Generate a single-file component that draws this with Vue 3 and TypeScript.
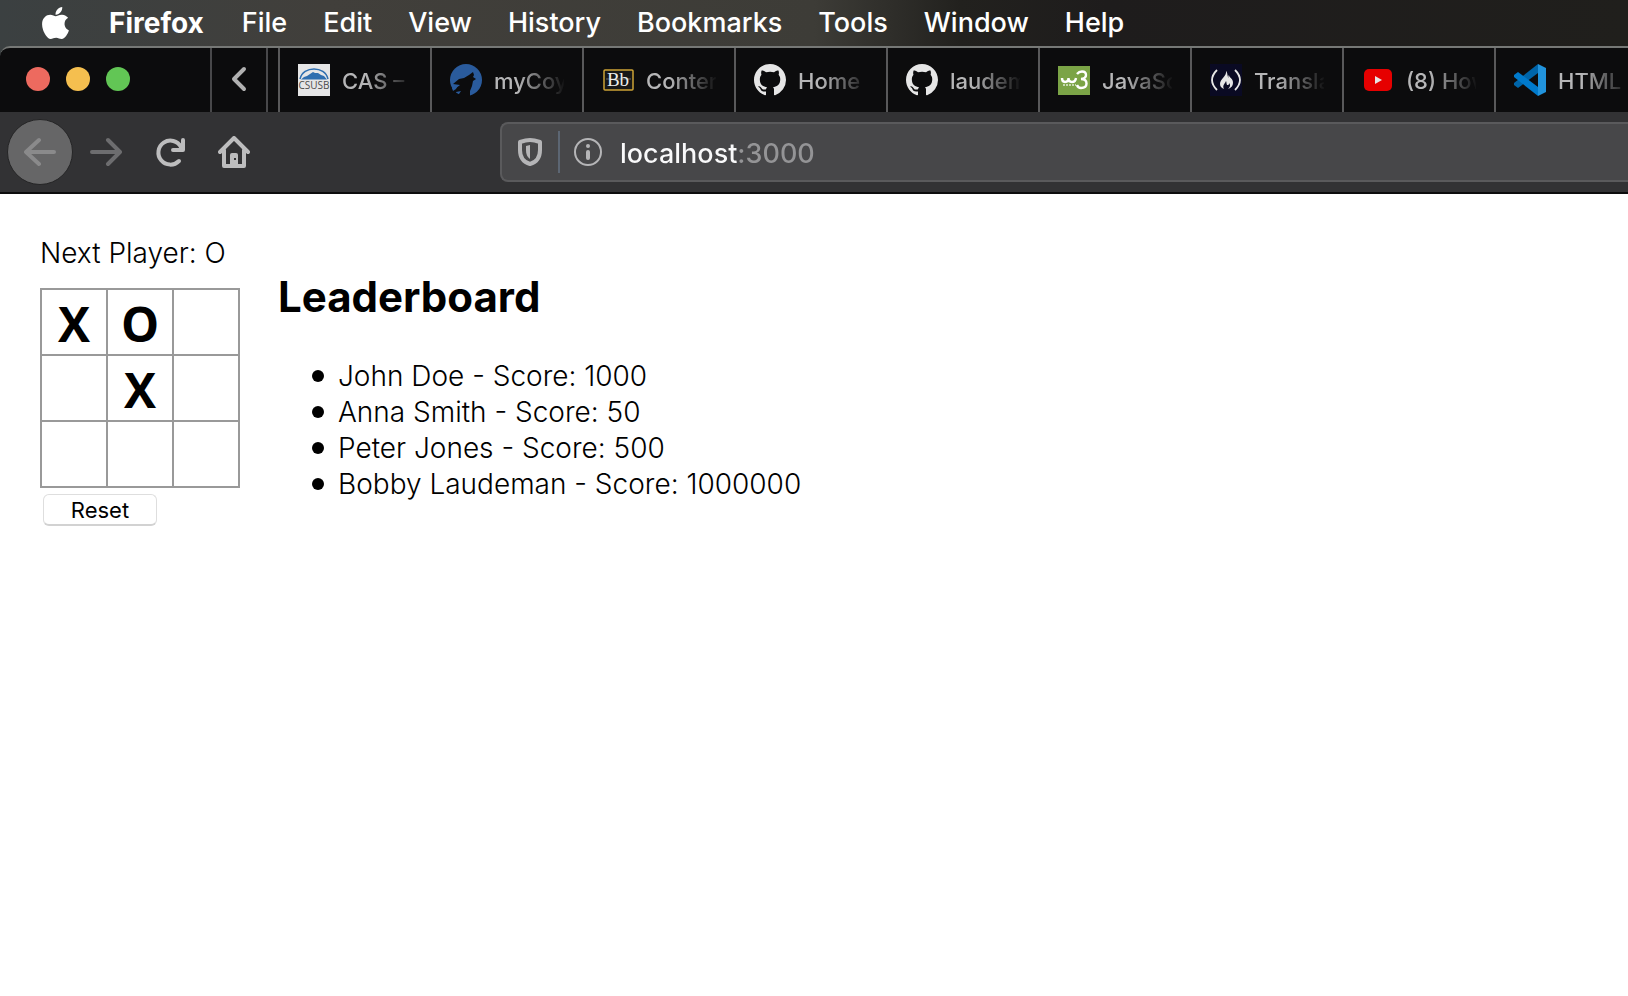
<script setup lang="ts">
import { ref, computed } from 'vue'

type Mark = 'X' | 'O' | ''

interface Tab {
  icon: string
  label: string
}

interface Entry {
  name: string
  score: number
}

const menus: string[] = ['Firefox', 'File', 'Edit', 'View', 'History', 'Bookmarks', 'Tools', 'Window', 'Help']

const tabs: Tab[] = [
  { icon: 'csusb', label: 'CAS –' },
  { icon: 'coyote', label: 'myCoy' },
  { icon: 'bb', label: 'Conter' },
  { icon: 'github', label: 'Home' },
  { icon: 'github', label: 'laudem' },
  { icon: 'w3', label: 'JavaSc' },
  { icon: 'fcc', label: 'Transla' },
  { icon: 'youtube', label: '(8) How' },
  { icon: 'vscode', label: 'HTML' },
]

const leaders: Entry[] = [
  { name: 'John Doe', score: 1000 },
  { name: 'Anna Smith', score: 50 },
  { name: 'Peter Jones', score: 500 },
  { name: 'Bobby Laudeman', score: 1000000 },
]

const address = ref('localhost:3000')
const squares = ref<Mark[]>(['X', 'O', '', '', 'X', '', '', '', ''])
const nextPlayer = computed<Mark>(() => (squares.value.filter(Boolean).length % 2 === 0 ? 'X' : 'O'))

function play(index: number): void {
  if (!squares.value[index]) squares.value[index] = nextPlayer.value
}

function reset(): void {
  squares.value = Array<Mark>(9).fill('')
}
</script>

<template>
  <div class="screen">
    <nav class="menubar" aria-label="Menu bar">
      <button class="apple" type="button" aria-label="Apple menu">
        <svg viewBox="4 32 376 448" width="27" height="32" fill="#fff">
          <path d="M318.7 268.7c-.2-36.7 16.4-64.4 50-84.8-18.8-26.9-47.2-41.7-84.7-44.6-35.5-2.8-74.3 20.7-88.5 20.7-15 0-49.4-19.7-76.4-19.7C63.3 141.2 4 184.8 4 273.5q0 39.3 14.4 81.2c12.8 36.7 59 126.7 107.2 125.2 25.2-.6 43-17.9 75.8-17.9 31.8 0 48.3 17.9 76.4 17.9 48.6-.7 90.4-82.5 102.6-119.3-65.2-30.7-61.7-90-61.7-91.9zm-56.6-164.2c27.3-32.4 24.8-61.9 24-72.5-24.1 1.4-52 16.4-67.9 34.9-17.5 19.8-27.8 44.3-25.6 71.9 26.1 2 49.9-11.4 69.5-34.3z" />
        </svg>
      </button>
      <button v-for="menu in menus" :key="menu" class="menu" type="button">{{ menu }}</button>
    </nav>

    <div class="browser">
      <div class="tabstrip">
        <div class="lights">
          <button class="light close" type="button" aria-label="Close window"></button>
          <button class="light minimise" type="button" aria-label="Minimise window"></button>
          <button class="light zoom" type="button" aria-label="Zoom window"></button>
        </div>
        <button class="scroll" type="button" aria-label="Scroll tabs left">
          <svg viewBox="0 0 16 26" width="16" height="26" fill="none" stroke="#b1b1b1" stroke-width="4" stroke-linecap="round" stroke-linejoin="round">
            <path d="M13 3 3 13l10 10" />
          </svg>
        </button>
        <div class="tabs">
          <button v-for="(tab, i) in tabs" :key="i" class="tab" type="button">
            <svg viewBox="0 0 32 32" width="32" height="32" aria-hidden="true">
              <g v-if="tab.icon === 'csusb'">
                <rect width="32" height="32" fill="#e6e6e6" />
                <path d="M2 15C5 1.500 27 1.500 30 15" fill="none" stroke="#2f6fb0" stroke-width="1.500" />
                <path d="M3 15.500 6 13l3-1 3-2 3-2 2 1 3 0 3 2 3 1 3 3.500Z" fill="#2f6fb0" />
                <text x="16" y="25" text-anchor="middle" font-size="10" fill="#4c4c4c" class="csusb">CSUSB</text>
              </g>
              <g v-else-if="tab.icon === 'coyote'">
                <circle cx="16" cy="16" r="16" fill="#2a5b9c" />
                <path d="M3 20 9 15l5-1 5-3 4-3 1 3-1 2 3 2-3 2-1 5-2 5 0 6H7l4-6-5 1-2 3-3-3 9-7Z" fill="#0c0c0d" />
                <path d="M2 24l6-3-2 4-3 2Z" fill="#2a5b9c" />
              </g>
              <g v-else-if="tab.icon === 'bb'">
                <rect x="2" y="6" width="29" height="20" rx="1" fill="#171717" stroke="#cda336" stroke-width="1.500" />
                <path d="M4 15h25" stroke="#676767" stroke-width="1" />
                <text x="16" y="22" text-anchor="middle" font-size="19" fill="#ececec" class="bb">Bb</text>
              </g>
              <path
                v-else-if="tab.icon === 'github'"
                transform="scale(2)"
                fill="#e6e6e6"
                d="M8 0C3.580 0 0 3.580 0 8c0 3.540 2.290 6.530 5.470 7.590.4.070.55-.17.55-.38 0-.19-.010-.82-.010-1.490-2.010.37-2.530-.49-2.690-.94-.090-.23-.48-.94-.82-1.130-.28-.15-.68-.52-.010-.53.63-.010 1.080.58 1.230.82.72 1.210 1.870.87 2.330.66.070-.52.28-.87.51-1.070-1.780-.2-3.640-.89-3.640-3.950 0-.87.31-1.590.82-2.150-.080-.2-.36-1.020.080-2.120 0 0 .67-.21 2.200.82.64-.18 1.320-.27 2-.27s1.360.090 2 .27c1.530-1.040 2.200-.82 2.200-.82.44 1.100.16 1.920.080 2.120.51.56.82 1.270.82 2.150 0 3.070-1.870 3.750-3.650 3.950.29.25.54.73.54 1.480 0 1.070-.010 1.930-.010 2.200 0 .21.15.46.55.38A8.010 8.010 0 0 0 16 8c0-4.420-3.580-8-8-8Z"
              />
              <g v-else-if="tab.icon === 'w3'">
                <rect y="2" width="32" height="29" fill="#7ba446" />
                <path d="M4 14q0 4 3 4 3.500 0 3.500-4 0 4 3.500 4 3.500 0 4-4" fill="none" stroke="#fff" stroke-width="2.400" />
                <path d="M19 10q2-2.500 5-2.500 4 0 4 3.500t-5 4q5.500 0 5.500 4.500T23 24q-3 0-4-3" fill="none" stroke="#fff" stroke-width="2.400" />
                <path d="M5 21h13" stroke="#e1ebd3" stroke-width="1.500" stroke-dasharray="2 1" />
              </g>
              <g v-else-if="tab.icon === 'fcc'">
                <rect width="32" height="32" fill="#0a0a23" />
                <path d="M7 6Q-3 16 7 26M25 6q10 10 0 20" fill="none" stroke="#e6e6e6" stroke-width="1.800" />
                <path d="M16 7c1 5-6 8-6 13 0 3 2 4 4 5-2-4 1-5 2-8 1 2 0 4 2 4 1 0 1-1 1-2 2 2 1 4-1 6 3-1 5-3 5-6 0-5-4-5-4-8-1 1-1 2 0 3-2-1-1-5-3-7Z" fill="#e6e6e6" />
              </g>
              <g v-else-if="tab.icon === 'youtube'">
                <rect x="2" y="5" width="28" height="22" rx="5" fill="#e60000" />
                <path d="m13 12 7 4-7 4Z" fill="#e6e6e6" />
              </g>
              <g v-else>
                <path d="m24 0 8 4v24l-8 4Z" fill="#2193dc" />
                <path d="M24 0v9L4 24l-4-3v-2Z" fill="#0065a9" />
                <path d="M24 32v-9L4 8 0 11v2Z" fill="#007acc" />
              </g>
            </svg>
            <span class="label">{{ tab.label }}</span>
          </button>
        </div>
      </div>

      <div class="toolbar">
        <div class="controls">
          <button class="back" type="button" aria-label="Back">
            <svg viewBox="0 0 32 32" width="32" height="32" fill="none" stroke="#8a8a8b" stroke-width="4" stroke-linecap="round" stroke-linejoin="round">
              <path d="M30 16H3M15 4 2 16l13 12" />
            </svg>
          </button>
          <button class="tool" type="button" aria-label="Forward">
            <svg viewBox="0 0 32 32" width="32" height="32" fill="none" stroke="#6d6d6f" stroke-width="4" stroke-linecap="round" stroke-linejoin="round">
              <path d="M2 16h27M18 4l12 12-12 12" />
            </svg>
          </button>
          <button class="tool" type="button" aria-label="Reload">
            <svg viewBox="0 0 32 32" width="32" height="32" fill="none" stroke="#bdbdbe" stroke-width="4" stroke-linecap="round" stroke-linejoin="round">
              <path d="M25 25A12 12 0 1 1 27 11" />
              <path d="M29 4v10H19" />
              <path d="M29 8v6h-6Z" fill="#bdbdbe" stroke="none" />
            </svg>
          </button>
          <button class="tool" type="button" aria-label="Home">
            <svg viewBox="0 0 32 32" width="32" height="32" fill="none" stroke="#bdbdbe" stroke-width="4" stroke-linecap="round" stroke-linejoin="round">
              <path d="M2 16 16 2l14 14M6 14v16h20V14" />
              <path d="M12 30V19q0-2 2-2h4q2 0 2 2v11Z" fill="#bdbdbe" stroke="none" />
              <rect x="16" y="22" width="2" height="2" fill="#323234" stroke="none" />
            </svg>
          </button>
        </div>
        <div class="urlbar">
          <svg viewBox="0 0 24 28" width="24" height="28" fill="none" stroke="#b5b5b7" aria-hidden="true">
            <path d="M2 4Q8 2 12 2t10 2V12c0 7-3 12-10 14C5 24 2 19 2 12Z" stroke-width="4" stroke-linejoin="round" />
            <path d="M12 7v14c-3-2-4-5-4-9V8Z" fill="#b5b5b7" stroke="none" />
          </svg>
          <span class="divider"></span>
          <svg viewBox="0 0 28 28" width="28" height="28" fill="none" stroke="#b5b5b7" stroke-width="2" aria-hidden="true">
            <circle cx="14" cy="14" r="13" />
            <path d="M14 14v6" stroke-width="4" stroke-linecap="round" />
            <circle cx="14" cy="8" r="2" fill="#b5b5b7" stroke="none" />
          </svg>
          <input v-model="address" class="address" type="text" aria-label="Address" spellcheck="false" />
        </div>
      </div>
    </div>

    <main class="page">
      <section class="game">
        <p class="status">Next Player: {{ nextPlayer }}</p>
        <div class="board">
          <button v-for="(mark, i) in squares" :key="i" class="square" type="button" :aria-label="`Square ${i + 1} ${mark}`" @click="play(i)">{{ mark }}</button>
        </div>
        <button class="reset" type="button" @click="reset">Reset</button>
      </section>
      <section class="leaderboard">
        <h2>Leaderboard</h2>
        <ul>
          <li v-for="entry in leaders" :key="entry.name">{{ entry.name }} - Score: {{ entry.score }}</li>
        </ul>
      </section>
    </main>
  </div>
</template>

<style>
body {
  margin: 0;
  background: #fff;
}
</style>

<style scoped>
.screen {
  font-family: Inter, "Liberation Sans", sans-serif;
  overflow: hidden;
  background: #fff;
}

button {
  padding: 0;
  border: 0;
  background: none;
  color: inherit;
  font: inherit;
}

svg {
  display: block;
  flex: none;
}

.menubar {
  display: flex;
  align-items: center;
  height: 46px;
  padding: 0 42px;
  gap: 36px;
  background: linear-gradient(90deg, #3b4041 0, #413f3b 20%, #3d3c37 50%, #22211e 59%, #1e1c1c 68%, #201f1c 100%);
  color: #fff;
  font-size: 27px;
  font-weight: 500;
  line-height: 44px;
}

.menu {
  height: 44px;
  white-space: nowrap;
}

.apple {
  height: 40px;
  margin-right: 4px;
}

.apple + .menu {
  margin-right: 2px;
  font-size: 28px;
  font-weight: 700;
}

.browser {
  background: #3b4041;
}

.tabstrip {
  display: flex;
  height: 66px;
  box-sizing: border-box;
  border-top: 2px solid #767876;
  border-top-left-radius: 10px;
  background: #0c0c0d;
  overflow: hidden;
}

.lights {
  display: flex;
  align-items: center;
  flex: none;
  box-sizing: border-box;
  width: 210px;
  padding: 0 0 2px 26px;
  gap: 16px;
}

.light {
  width: 24px;
  height: 24px;
  border-radius: 50%;
}

.close {
  background: #ed6a5f;
}

.minimise {
  background: #f5bf4f;
}

.zoom {
  background: #62c655;
}

.scroll {
  display: flex;
  align-items: center;
  justify-content: center;
  flex: none;
  box-sizing: border-box;
  width: 58px;
  padding-bottom: 2px;
  border: solid #48484a;
  border-width: 0 2px;
}

.tabs {
  display: flex;
  flex: 1;
  min-width: 0;
  margin-left: 10px;
  overflow: hidden;
}

.tab {
  display: flex;
  align-items: center;
  flex: none;
  box-sizing: border-box;
  width: 152px;
  padding-left: 18px;
  gap: 12px;
  border-left: 2px solid #59595a;
  color: #b6b6b7;
  font-size: 22px;
  font-weight: 500;
  text-align: left;
}

.label {
  width: 70px;
  padding-top: 2px;
  overflow: hidden;
  white-space: nowrap;
  line-height: 32px;
  -webkit-mask-image: linear-gradient(90deg, #000 24px, transparent 72px);
  mask-image: linear-gradient(90deg, #000 24px, transparent 72px);
}

.csusb {
  font-family: "Open Sans", sans-serif;
}

.bb {
  font-family: "Liberation Serif", serif;
}

.toolbar {
  display: flex;
  align-items: center;
  height: 82px;
  box-sizing: border-box;
  border-bottom: 2px solid #0c0c0d;
  background: #323234;
}

.controls {
  display: flex;
  align-items: center;
  flex: none;
  box-sizing: border-box;
  width: 500px;
  padding-left: 7px;
  gap: 32px;
}

.back {
  display: flex;
  align-items: center;
  justify-content: center;
  width: 66px;
  height: 66px;
  margin-right: -15px;
  box-sizing: border-box;
  border: 1px solid #252526;
  border-radius: 50%;
  background: #666667;
}

.urlbar {
  display: flex;
  align-items: center;
  flex: 1;
  min-width: 0;
  height: 60px;
  box-sizing: border-box;
  padding-left: 16px;
  border: 2px solid #5a5a5c;
  border-right: 0;
  border-radius: 8px 0 0 8px;
  background: #474749;
}

.divider {
  width: 2px;
  height: 42px;
  margin: 0 14px 0 16px;
  background: #5c6673;
}

.address {
  flex: 1;
  min-width: 0;
  height: 44px;
  box-sizing: border-box;
  margin-left: 18px;
  padding: 3px 0 0;
  border: 0;
  outline: 0;
  background: linear-gradient(90deg, #f9f9fa 118px, #949496 118px);
  -webkit-background-clip: text;
  background-clip: text;
  color: transparent;
  font: 500 27px/40px Inter, "Liberation Sans", sans-serif;
}

.page {
  display: flex;
  padding: 41px 40px 40px;
  gap: 38px;
  color: #000;
  font-family: "Century Gothic", Inter, sans-serif;
  font-size: 28px;
  font-weight: 300;
  line-height: 36px;
}

.game {
  width: 200px;
}

.status {
  margin: 0 0 17px;
  white-space: nowrap;
}

.board {
  display: grid;
  grid-template-columns: repeat(3, 66px);
  border: solid #999;
  border-width: 2px 0 0 2px;
}

.square {
  box-sizing: border-box;
  height: 66px;
  padding-top: 4px;
  border: solid #999;
  border-width: 0 2px 2px 0;
  font: 700 48px/60px "Open Sans", sans-serif;
}

.reset {
  display: block;
  box-sizing: border-box;
  width: 114px;
  height: 32px;
  margin: 6px 0 0 3px;
  border: 1px solid #dedede;
  border-bottom: 2px solid #d2d2d2;
  border-radius: 6px;
  background: #fff;
  font: 400 22px/28px Inter, "Liberation Sans", sans-serif;
}

.leaderboard {
  padding-top: 36px;
}

h2 {
  margin: 0 0 35px;
  font-size: 42px;
  font-weight: 700;
  line-height: 52px;
}

ul {
  margin: 0;
  padding-left: 34px;
  list-style: none;
}

li {
  display: flex;
  align-items: center;
  gap: 14px;
}

li::before {
  content: "";
  width: 12px;
  height: 12px;
  border-radius: 50%;
  background: #000;
}
</style>
